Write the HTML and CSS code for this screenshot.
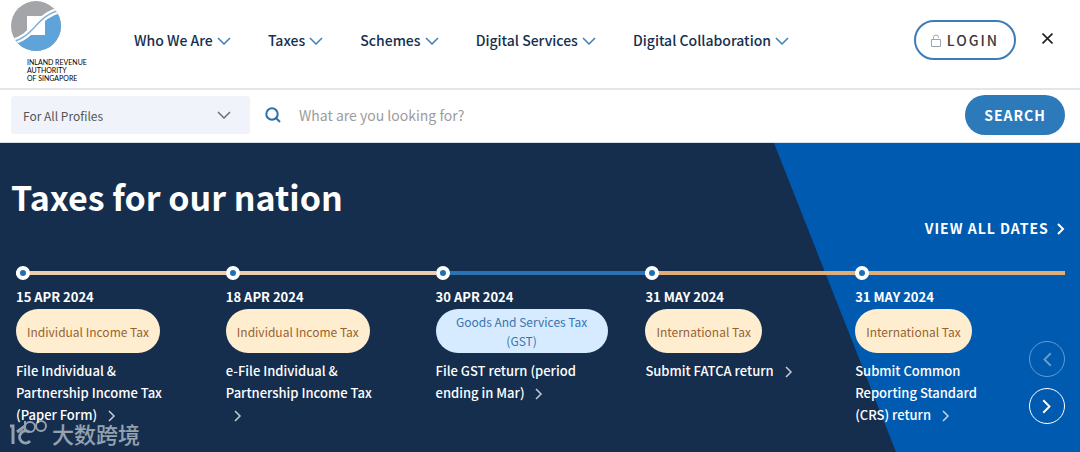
FILE: index.html
```html
<!DOCTYPE html>
<html lang="en">
<head>
    <meta charset="UTF-8">
    <meta name="viewport" content="width=device-width, initial-scale=1.0">
    <title>Inland Revenue Authority of Singapore</title>
    <link rel="stylesheet" href="styles.css">
</head>
<body>

<header class="header">
    <a class="logo" href="#">
        <svg class="logo-mark" viewBox="0 0 50 52" aria-hidden="true">
            <defs>
                <clipPath id="disc"><circle cx="25" cy="26" r="25"/></clipPath>
            </defs>
            <g clip-path="url(#disc)">
                <rect width="50" height="52" fill="#a3a5a8"/>
                <path d="M0 43 C23 39 25 15 50 11 V52 H0Z" fill="#5ea3d9"/>
                <path d="M16 16h18v19H16z" fill="#fff"/>
                <path d="M0 42 C23 38 25 15 50 10" fill="none" stroke="#fff" stroke-width="6"/>
                <path d="M0 42 C23 38 25 15 50 10" fill="none" stroke="#7fb2dc" stroke-width="1.500"/>
            </g>
        </svg>
        <span class="logo-text">INLAND REVENUE<br>AUTHORITY<br>OF SINGAPORE</span>
    </a>

    <nav class="nav">
        <a href="#">Who We Are <svg class="chevron" viewBox="0 0 14 8"><path d="M1 1l6 6 6-6"/></svg></a>
        <a href="#">Taxes <svg class="chevron" viewBox="0 0 14 8"><path d="M1 1l6 6 6-6"/></svg></a>
        <a href="#">Schemes <svg class="chevron" viewBox="0 0 14 8"><path d="M1 1l6 6 6-6"/></svg></a>
        <a href="#">Digital Services <svg class="chevron" viewBox="0 0 14 8"><path d="M1 1l6 6 6-6"/></svg></a>
        <a href="#">Digital Collaboration <svg class="chevron" viewBox="0 0 14 8"><path d="M1 1l6 6 6-6"/></svg></a>
    </nav>

    <button class="login" type="button">
        <svg class="lock" viewBox="0 0 10 13" aria-hidden="true"><path d="M.5 5.500h9v7h-9zM2.500 5.500V3.500a2.500 2.500 0 0 1 5 0V4"/></svg>
        LOGIN
    </button>
    <button class="close" type="button" aria-label="Close">
        <svg viewBox="0 0 10 10"><path d="M.5.5l9 9M9.500.5l-9 9"/></svg>
    </button>
</header>

<form class="search">
    <div class="profile">
        <select aria-label="Profile">
            <option>For All Profiles</option>
        </select>
        <svg class="chevron" viewBox="0 0 14 8"><path d="M1 1l6 6 6-6"/></svg>
    </div>
    <label class="search-label" for="query" aria-label="Search">
        <svg viewBox="0 0 16 16"><circle cx="7" cy="7" r="5.700"/><path d="M11 11l4 4"/></svg>
    </label>
    <input id="query" type="text" placeholder="What are you looking for?">
    <button class="search-button" type="button">SEARCH</button>
</form>

<main class="hero">
    <svg class="hero-shape" viewBox="0 0 306 309" preserveAspectRatio="none" aria-hidden="true"><path d="M0 0H306V309H122Z"/></svg>

    <div class="hero-head">
        <h1>Taxes for our nation</h1>
        <a class="view-all" href="#">VIEW ALL DATES <svg class="arrow" viewBox="0 0 8 12"><path d="M1 1l5 5-5 5"/></svg></a>
    </div>

    <ol class="timeline">
        <li class="cream">
            <time datetime="2024-04-15">15 APR 2024</time>
            <span class="tag">Individual Income Tax</span>
            <a href="#">File Individual &amp; Partnership Income Tax (Paper Form) <svg class="arrow" viewBox="0 0 8 12"><path d="M1 1l5 5-5 5"/></svg></a>
        </li>
        <li class="cream">
            <time datetime="2024-04-18">18 APR 2024</time>
            <span class="tag">Individual Income Tax</span>
            <a href="#">e-File Individual &amp; Partnership Income Tax <svg class="arrow" viewBox="0 0 8 12"><path d="M1 1l5 5-5 5"/></svg></a>
        </li>
        <li class="blue">
            <time datetime="2024-04-30">30 APR 2024</time>
            <span class="tag">Goods And Services Tax (GST)</span>
            <a href="#">File GST return (period ending in Mar) <svg class="arrow" viewBox="0 0 8 12"><path d="M1 1l5 5-5 5"/></svg></a>
        </li>
        <li class="orange">
            <time datetime="2024-05-31">31 MAY 2024</time>
            <span class="tag">International Tax</span>
            <a href="#">Submit FATCA return <svg class="arrow" viewBox="0 0 8 12"><path d="M1 1l5 5-5 5"/></svg></a>
        </li>
        <li class="orange">
            <time datetime="2024-05-31">31 MAY 2024</time>
            <span class="tag">International Tax</span>
            <a href="#">Submit Common Reporting Standard (CRS) return <svg class="arrow" viewBox="0 0 8 12"><path d="M1 1l5 5-5 5"/></svg></a>
        </li>
    </ol>

    <div class="pager">
        <button type="button" aria-label="Previous" disabled><svg class="arrow" viewBox="0 0 8 12"><path d="M7 1L2 6l5 5"/></svg></button>
        <button type="button" aria-label="Next"><svg class="arrow" viewBox="0 0 8 12"><path d="M1 1l5 5-5 5"/></svg></button>
    </div>

    <div class="watermark">
        <svg viewBox="0 0 38 26" aria-hidden="true">
            <path stroke-width="3" d="M0 6h3v18M20 21a6 6 0 1 1-1-9M7 12l8-6"/>
            <path d="M15 1v11"/>
            <circle cx="20" cy="7" r="5"/>
            <circle cx="31" cy="6" r="5"/>
        </svg>
        <span lang="zh">大数跨境</span>
    </div>
</main>

</body>
</html>
```
FILE: styles.css
```css
*,
*::before,
*::after {
    box-sizing: border-box;
}

body {
    margin: 0;
    font-family: "Noto Sans CJK SC", "Noto Sans", sans-serif;
    font-size: 14px;
    color: #14304f;
    background: #fff;
}

a {
    color: inherit;
    text-decoration: none;
}

button,
input,
select {
    font: inherit;
}

svg {
    fill: none;
    stroke: currentColor;
}

/* header */
.header {
    display: flex;
    align-items: center;
    height: 90px;
    padding: 0 27px 8px 11px;
    border-bottom: 2px solid #e3e5e6;
}

.logo {
    width: 123px;
    padding-top: 2px;
    color: #222;
}

.logo-mark {
    display: block;
    width: 50px;
    height: 52px;
    stroke: none;
}

.logo-text {
    display: block;
    margin: 6px 0 0 16px;
    font-family: Lato, sans-serif;
    font-size: 7px;
    line-height: 8px;
    color: #000;
}

.nav {
    display: flex;
    gap: 37px;
    flex: 1;
    font-weight: 500;
    line-height: 20px;
    white-space: nowrap;
}

.chevron {
    width: 14px;
    height: 8px;
    stroke-width: 1.5;
}

.nav .chevron {
    margin-left: 1px;
    vertical-align: 1px;
    color: #3f7fb8;
}

.login {
    display: flex;
    align-items: center;
    justify-content: center;
    gap: 6px;
    width: 102px;
    height: 40px;
    padding: 0;
    border: 2px solid #3b7db8;
    border-radius: 20px;
    background: #fff;
    color: #3a3a3a;
    font-weight: 500;
    letter-spacing: 2px;
}

.lock {
    width: 10px;
    height: 13px;
    color: #9aa5b5;
}

.close {
    display: flex;
    margin: 0 0 4px 26px;
    padding: 0;
    border: 0;
    background: none;
    color: #222;
}

.close svg {
    width: 11px;
    height: 11px;
    stroke-width: 1.5;
}

/* search bar */
.search {
    display: flex;
    align-items: center;
    height: 53px;
    padding: 0 15px 2px 11px;
    border-bottom: 1px solid #d5e2ea;
}

.profile {
    position: relative;
    width: 239px;
}

.profile select {
    width: 100%;
    height: 38px;
    padding: 0 12px;
    border: 0;
    border-radius: 3px;
    appearance: none;
    background: #f0f4fa;
    color: #555;
    font-size: 12px;
}

.profile .chevron {
    position: absolute;
    top: 15px;
    right: 19px;
    color: #66717d;
    pointer-events: none;
}

.search-label {
    display: flex;
    margin: 0 18px 0 15px;
    color: #2a6fae;
}

.search-label svg {
    width: 16px;
    height: 16px;
    stroke-width: 2;
}

.search input {
    flex: 1;
    min-width: 0;
    height: 38px;
    padding: 0;
    border: 0;
    color: #444;
}

.search input::placeholder {
    color: #9c9c9c;
}

.search-button {
    width: 100px;
    height: 40px;
    padding: 0;
    border: 0;
    border-radius: 20px;
    background: #2d7aba;
    color: #fff;
    font-weight: 700;
    letter-spacing: 1px;
}

/* hero */
.hero {
    position: relative;
    min-height: 309px;
    padding: 30px 15px 20px 11px;
    background: #152e4e;
    color: #fff;
}

.hero-shape {
    position: absolute;
    top: 0;
    right: 0;
    width: 306px;
    height: 100%;
    fill: #005bb0;
    stroke: none;
}

.hero-head {
    position: relative;
    display: flex;
    align-items: flex-end;
    justify-content: space-between;
    height: 66px;
}

h1 {
    align-self: flex-start;
    margin: 0;
    font-size: 34px;
    line-height: 48px;
}

.view-all {
    font-weight: 700;
    letter-spacing: 1px;
    line-height: 22px;
}

.arrow {
    width: 8px;
    height: 12px;
    stroke-width: 1.5;
}

.view-all .arrow {
    margin-left: 4px;
    vertical-align: -1px;
    stroke-width: 2;
}

.timeline {
    position: relative;
    display: grid;
    grid-template-columns: repeat(5, 1fr);
    margin: 27px 0 0 5px;
    padding: 0;
    list-style: none;
}

.timeline li {
    position: relative;
    display: flex;
    flex-direction: column;
    align-items: flex-start;
    padding-top: 21px;
}

.timeline li::before {
    content: "";
    position: absolute;
    top: 5px;
    left: 0;
    width: 100%;
    height: 4px;
    background: var(--line);
}

.timeline li::after {
    content: "";
    position: absolute;
    top: 0;
    left: 0;
    width: 14px;
    height: 14px;
    border: 4px solid #fff;
    border-radius: 50%;
    background: #1d6fb5;
}

.cream {
    --line: #ebcfac;
}

.blue {
    --line: #2b72b3;
}

.orange {
    --line: #dfae78;
}

.timeline time {
    font-size: 13px;
    font-weight: 700;
    line-height: 20px;
}

.tag {
    display: flex;
    align-items: center;
    max-width: 172px;
    height: 44px;
    margin: 2px 0 7px;
    padding: 0 11px;
    border-radius: 22px;
    background: #ffedcf;
    color: #96622f;
    font-size: 12px;
    line-height: 19px;
    text-align: center;
}

.blue .tag {
    background: #d6ebff;
    color: #3a73ae;
}

.timeline a {
    max-width: 156px;
    font-size: 13px;
    font-weight: 500;
    line-height: 22px;
}

.timeline .arrow {
    margin-left: 8px;
    vertical-align: -2px;
    opacity: .75;
}

.pager {
    position: absolute;
    right: 15px;
    bottom: 28px;
    display: grid;
    gap: 11px;
}

.pager button {
    display: flex;
    align-items: center;
    justify-content: center;
    width: 36px;
    height: 36px;
    padding: 0;
    border: 1px solid #fff;
    border-radius: 50%;
    background: none;
    color: #fff;
}

.pager .arrow {
    width: 10px;
    height: 15px;
}

.pager button:disabled {
    opacity: .4;
}

.watermark {
    position: absolute;
    left: 10px;
    bottom: 5px;
    display: flex;
    align-items: center;
    gap: 4px;
    color: #fff;
    font-size: 22px;
    font-weight: 500;
    line-height: 28px;
    opacity: .55;
}

.watermark svg {
    width: 38px;
    height: 26px;
    stroke-width: 2;
}
```
